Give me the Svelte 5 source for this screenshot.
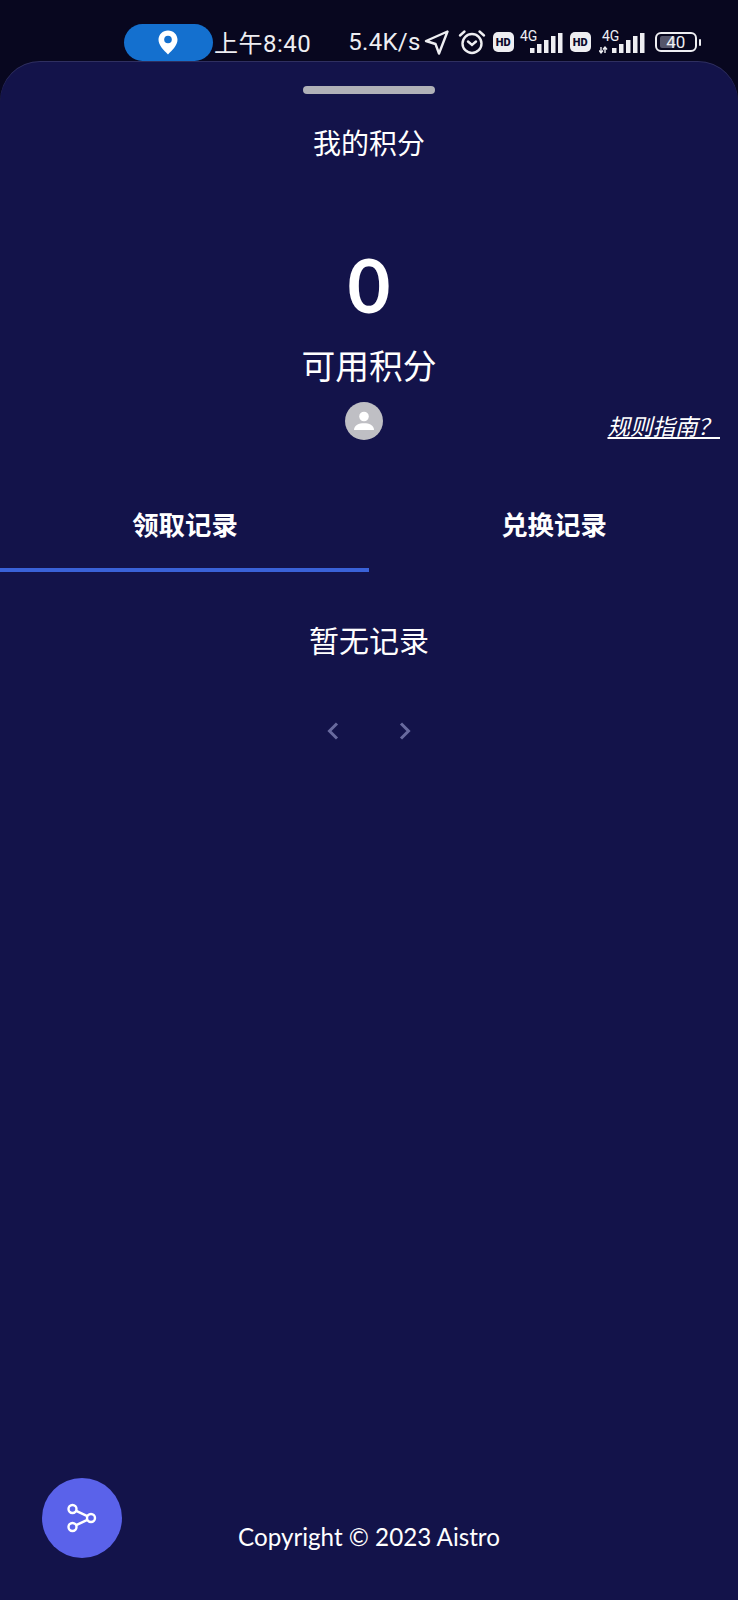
<script>
	const tabs = ['领取记录', '兑换记录'];
	let active = 0;
	const barHeights = [5, 9, 13, 17, 20];
</script>

<div class="page">
	<header class="status">
		<div class="pill">
			<svg width="20" height="25" viewBox="0 0 20 25">
				<path d="M10 0.5C4.6 0.5 0.5 4.6 0.5 9.8c0 5.6 5.4 10.6 9.5 14.7 4.1-4.1 9.5-9.1 9.5-14.7C19.500 4.600 15.400 0.500 10 0.500z" fill="#fff" />
				<circle cx="10" cy="9.500" r="3.800" fill="#1470cf" />
			</svg>
		</div>
		<span class="time">上午8:40</span>
		<span class="speed">5.4K/s</span>
		<svg class="nav" width="25" height="25" viewBox="0 0 25 25" fill="none" stroke="#eeeef2" stroke-width="2.400" stroke-linejoin="round">
			<path d="M23.500 1.500 2 11l9.500 3 3.500 9.500z" />
		</svg>
		<svg class="alarm" width="28" height="26" viewBox="0 0 28 26" fill="none" stroke="#eeeef2" stroke-width="2.400" stroke-linecap="round">
			<circle cx="14" cy="14.500" r="9.500" />
			<path d="M2 6.500 6.500 2.500M26 6.500 21.500 2.500" />
			<path d="M10 12.500l4 3.500 4-3.500" />
		</svg>
		<span class="hd">HD</span>
		<svg class="signal" width="44" height="32" viewBox="0 -4 44 32">
			<text x="1" y="11" class="net">4G</text>
			{#each barHeights as h, i}
				<rect x={11 + i * 7} y={23 - h} width="4.500" height={h} fill="#eeeef2" />
			{/each}
		</svg>
		<span class="hd second">HD</span>
		<svg class="signal arrows" width="46" height="32" viewBox="0 -4 46 32">
			<text x="3" y="11" class="net">4G</text>
			<path d="M2 17v6M0 20.500l2 2.500 2-2.500M6 23v-6M4 19.500l2-2.500 2 2.500" stroke="#eeeef2" stroke-width="1.400" fill="none" />
			{#each barHeights as h, i}
				<rect x={13 + i * 7} y={23 - h} width="4.500" height={h} fill="#eeeef2" />
			{/each}
		</svg>
		<div class="battery">
			<div class="level"></div>
			<span>40</span>
		</div>
		<div class="nub"></div>
	</header>

	<main class="panel">
		<div class="handle"></div>
		<h1>我的积分</h1>
		<div class="points">0</div>
		<div class="label">可用积分</div>
		<div class="meta">
			<div class="avatar">
				<svg width="22" height="22" viewBox="0 0 22 22" fill="#fff">
					<circle cx="11" cy="6.500" r="4.800" />
					<path d="M1 20c0-5 5-6.800 10-6.800S21 15 21 20z" />
				</svg>
			</div>
			<a class="rules" href="#rules">规则指南？</a>
		</div>

		<div class="tabs">
			{#each tabs as tab, i}
				<button class:active={i === active} onclick={() => (active = i)}>{tab}</button>
			{/each}
		</div>

		<p class="empty">暂无记录</p>

		<div class="pager">
			<svg width="14" height="18" viewBox="0 0 14 18" fill="none" stroke="#686a9e" stroke-width="3">
				<path d="M11 1.500 3.500 9l7.500 7.500" />
			</svg>
			<svg width="14" height="18" viewBox="0 0 14 18" fill="none" stroke="#686a9e" stroke-width="3">
				<path d="M3 1.500 10.500 9 3 16.500" />
			</svg>
		</div>

		<footer>Copyright © 2023 Aistro</footer>

		<button class="fab" aria-label="分享">
			<svg width="30" height="30" viewBox="0 0 30 30" fill="none" stroke="#fff" stroke-width="2.400">
				<circle cx="5.500" cy="6" r="4" />
				<circle cx="5.500" cy="24" r="4" />
				<circle cx="24" cy="15" r="4" />
				<path d="M9.200 7.800 20.300 13.200M9.200 22.200 20.300 16.800" />
			</svg>
		</button>
	</main>
</div>

<style>
	:global(body) {
		background: #08071f;
	}
	.page {
		display: flex;
		flex-direction: column;
		height: 1600px;
		overflow: hidden;
		background: #08071f;
		color: #fff;
		font-family: 'Lato', 'Noto Sans CJK SC', sans-serif;
	}

	.status {
		display: flex;
		align-items: center;
		height: 61px;
		padding: 23px 0 0 124px;
		box-sizing: border-box;
		flex: none;
		font-family: 'Roboto', 'Noto Sans CJK SC', sans-serif;
		color: #eeeef2;
	}
	.pill {
		display: flex;
		align-items: center;
		justify-content: center;
		width: 89px;
		height: 37px;
		padding-right: 2px;
		box-sizing: border-box;
		border-radius: 19px;
		background: #1470cf;
	}
	.time {
		margin-left: 1px;
		padding-bottom: 1px;
		font-size: 24px;
		letter-spacing: 0.5px;
		white-space: nowrap;
	}
	.speed {
		margin-left: 37px;
		padding-bottom: 1px;
		font-size: 24px;
		letter-spacing: 0.3px;
		white-space: nowrap;
	}
	.nav {
		margin-left: 3px;
	}
	.alarm {
		margin-left: 9px;
	}
	.hd {
		display: flex;
		align-items: center;
		justify-content: center;
		width: 21px;
		height: 20px;
		margin-left: 7px;
		border-radius: 5px;
		background: #eeeef2;
		color: #0b0a2c;
		font-size: 11px;
		font-weight: 900;
	}
	.second {
		margin-left: 7px;
	}
	.signal {
		margin-left: 5px;
	}
	.arrows {
		margin-left: 8px;
	}
	.net {
		fill: #eeeef2;
		font-size: 14px;
		font-family: 'Roboto', sans-serif;
	}
	.battery {
		position: relative;
		display: flex;
		align-items: center;
		justify-content: center;
		width: 42px;
		height: 20px;
		margin-left: 10px;
		border: 2px solid #eeeef2;
		border-radius: 6px;
		box-sizing: border-box;
		font-size: 17px;
	}
	.battery span {
		position: relative;
	}
	.level {
		position: absolute;
		left: 3px;
		top: 2px;
		bottom: 2px;
		width: 40%;
		border-radius: 2px;
		background: #55556b;
	}
	.nub {
		width: 2px;
		height: 7px;
		margin-left: 2px;
		border-radius: 1px;
		background: #eeeef2;
	}

	.panel {
		position: relative;
		flex: 1;
		display: flex;
		flex-direction: column;
		align-items: center;
		background: #13134a;
		border-radius: 40px 40px 0 0;
		box-shadow: inset 0 1px 0 rgba(255, 255, 255, 0.12);
	}
	.handle {
		width: 132px;
		height: 8px;
		margin-top: 25px;
		border-radius: 4px;
		background: #b0b1b8;
	}
	h1 {
		margin: 29px 0 0;
		font-size: 28px;
		font-weight: 400;
		line-height: 40px;
	}
	.points {
		margin-top: 77px;
		font-size: 74px;
		font-weight: 700;
		line-height: 90px;
	}
	.label {
		margin-top: 12px;
		font-size: 33.800px;
		line-height: 48px;
	}
	.meta {
		position: relative;
		display: flex;
		justify-content: center;
		width: 100%;
		margin-top: 12px;
	}
	.avatar {
		display: flex;
		align-items: center;
		justify-content: center;
		width: 38px;
		height: 38px;
		margin-right: 10px;
		border-radius: 50%;
		background: #bfbfc4;
	}
	.rules {
		position: absolute;
		right: 18px;
		top: 9px;
		color: #fff;
		font-size: 22.500px;
		font-style: italic;
		line-height: 32px;
	}
	.tabs {
		display: grid;
		grid-template-columns: 1fr 1fr;
		width: 100%;
		margin-top: 38px;
	}
	.tabs button {
		height: 94px;
		padding: 0 0 0 1px;
		border: none;
		border-bottom: 4px solid transparent;
		background: none;
		color: #fff;
		font: 700 26.400px 'Lato', 'Noto Sans CJK SC', sans-serif;
	}
	.tabs .active {
		border-bottom-color: #3a62d8;
	}
	.empty {
		margin: 46px 0 0;
		font-size: 30px;
		line-height: 44px;
	}
	.pager {
		display: flex;
		gap: 58px;
		margin-top: 60px;
	}
	footer {
		margin-top: auto;
		margin-bottom: 47px;
		font-size: 24.200px;
		line-height: 32px;
	}
	.fab {
		position: absolute;
		left: 42px;
		bottom: 42px;
		display: flex;
		align-items: center;
		justify-content: center;
		width: 80px;
		height: 80px;
		padding: 0;
		border: none;
		border-radius: 50%;
		background: #5a62ea;
	}
</style>
